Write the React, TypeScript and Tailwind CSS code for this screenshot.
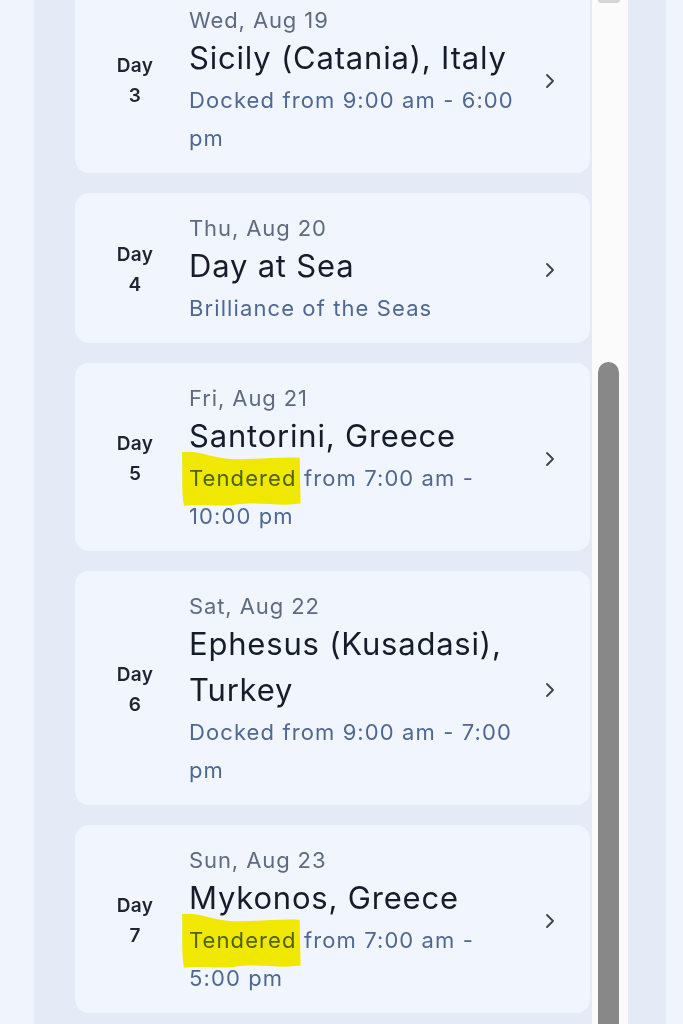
import React from 'react';

type Stop = {
  day: number;
  date: string;
  title: string;
  kind: 'Docked' | 'Tendered' | null;
  detail: string;
};

const stops: Stop[] = [
  { day: 3, date: 'Wed, Aug 19', title: 'Sicily (Catania), Italy', kind: 'Docked', detail: 'from 9:00 am - 6:00 pm' },
  { day: 4, date: 'Thu, Aug 20', title: 'Day at Sea', kind: null, detail: 'Brilliance of the Seas' },
  { day: 5, date: 'Fri, Aug 21', title: 'Santorini, Greece', kind: 'Tendered', detail: 'from 7:00 am - 10:00 pm' },
  { day: 6, date: 'Sat, Aug 22', title: 'Ephesus (Kusadasi), Turkey', kind: 'Docked', detail: 'from 9:00 am - 7:00 pm' },
  { day: 7, date: 'Sun, Aug 23', title: 'Mykonos, Greece', kind: 'Tendered', detail: 'from 7:00 am - 5:00 pm' },
];

// marker stroke drawn over the word, multiplied so the text turns olive
const Highlight: React.FC = () => (
  <svg
    className="absolute -left-[9px] -top-[9px] mix-blend-multiply pointer-events-none"
    style={{ width: 'calc(100% + 14px)', height: 'calc(100% + 20px)' }}
    viewBox="0 0 122 52"
    preserveAspectRatio="none"
  >
    <path d="M2 2 C20 0 30 7 50 8 C75 9 95 6 120 7 L121 48 C100 51 80 46 55 49 C35 51 20 48 4 50 C1 36 3 18 2 2 Z" fill="#fff200" />
  </svg>
);

const Chevron: React.FC = () => (
  <svg width="10" height="16" viewBox="0 0 10 16" fill="none">
    <path d="M2 2 L8 8 L2 14" stroke="#3a4150" strokeWidth="1.8" strokeLinecap="round" strokeLinejoin="round" />
  </svg>
);

const StopCard: React.FC<{ stop: Stop }> = ({ stop }) => (
  <div className="flex items-center bg-[#f0f5fe] rounded-[14px] pt-[20px] pb-[16px]">
    <div className="w-[114px] pl-[6px] flex flex-col items-center text-[19px] leading-[30px] font-semibold tracking-[0.3px] text-[#1f2433]">
      <span>Day</span>
      <span>{stop.day}</span>
    </div>
    <div className="w-[334px] flex flex-col">
      <span className="text-[22px] leading-[30px] tracking-[0.9px] text-[#5f6b80]">{stop.date}</span>
      <span className="text-[31px] leading-[46px] tracking-[0.8px] text-[#171c2c]">{stop.title}</span>
      <span className="text-[22px] leading-[38px] tracking-[1.1px] text-[#4f6890]">
        {stop.kind === 'Tendered' ? (
          <span className="relative inline-block">
            Tendered
            <Highlight />
          </span>
        ) : (
          stop.kind
        )}
        {stop.kind ? ' ' : ''}
        {stop.detail}
      </span>
    </div>
    <div className="ml-auto mr-[35px] flex">
      <Chevron />
    </div>
  </div>
);

export default function App() {
  return (
    <div
      className="flex w-[683px] h-[1024px] overflow-hidden bg-[#f0f5fd]"
      style={{ fontFamily: 'Inter, "Open Sans", sans-serif' }}
    >
      <div className="w-[34px] shrink-0" />
      <div className="w-[558px] shrink-0 bg-[#e4ebf7] pl-[41px] pr-[2px]">
        <div className="flex flex-col gap-[20px] -mt-[15px]">
          {stops.map(s => (
            <StopCard key={s.day} stop={s} />
          ))}
        </div>
      </div>
      <div className="w-[36px] shrink-0 bg-[#fbfbfb] flex flex-col items-start pl-[6px]">
        <div className="w-[22px] h-[3px] bg-[#d6d6d6] rounded-b-sm" />
        <div className="w-[21px] flex-1 mt-[359px] bg-[#888888] rounded-t-full" />
      </div>
      <div className="w-[38px] shrink-0 bg-[#e4ebf7]" />
      <div className="flex-1" />
    </div>
  );
}
